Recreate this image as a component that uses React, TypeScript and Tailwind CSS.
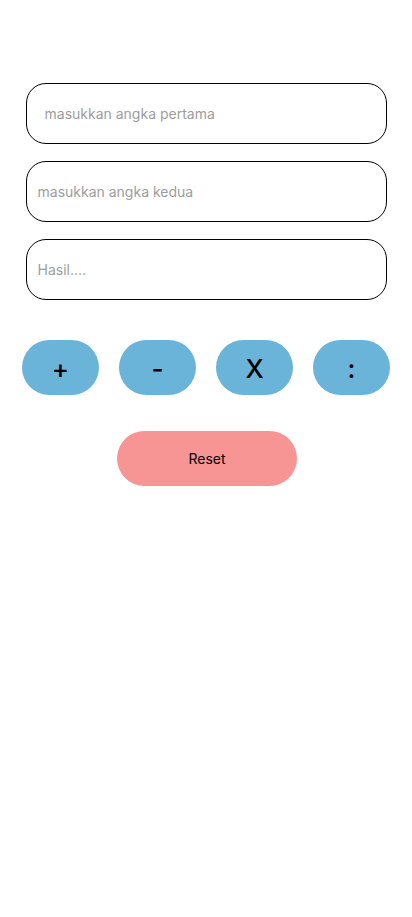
import { useState } from 'react'

export default function App() {
  const [a, setA] = useState('')
  const [b, setB] = useState('')
  const [hasil, setHasil] = useState('')

  const hitung = (op: string) => {
    const x = parseFloat(a)
    const y = parseFloat(b)
    if (isNaN(x) || isNaN(y)) return
    let r = 0
    if (op === '+') r = x + y
    if (op === '-') r = x - y
    if (op === 'x') r = x * y
    if (op === ':') r = x / y
    setHasil(String(r))
  }

  const reset = () => {
    setA('')
    setB('')
    setHasil('')
  }

  const inputClass =
    'h-[61px] w-[361px] rounded-[20px] border border-black bg-white text-[14px] text-black outline-none placeholder:text-[#9d9d9d]'

  return (
    <div className="min-h-[917px] w-[412px] bg-white font-['Inter','Noto_Sans',sans-serif]">
      <div className="flex flex-col items-center gap-[17px] pt-[83px]">
        <input className={`${inputClass} pl-[18px]`} placeholder="masukkan angka pertama" value={a} onChange={(e) => setA(e.target.value)} />
        <input className={`${inputClass} pl-[11px]`} placeholder="masukkan angka kedua" value={b} onChange={(e) => setB(e.target.value)} />
        <input className={`${inputClass} pl-[11px]`} placeholder="Hasil...." value={hasil} readOnly />
      </div>
      <div className="mt-[40px] flex justify-center gap-[20px]">
        {['+', '-', 'X', ':'].map((op) => (
          <button
            key={op}
            onClick={() => hitung(op.toLowerCase())}
            className="flex h-[55px] w-[77px] items-center justify-center rounded-full bg-[#6ab3d9] pt-[2px] text-[26px] font-medium leading-none text-black"
          >
            {op}
          </button>
        ))}
      </div>
      <div className="mt-[36px] flex justify-center pl-[2px]">
        <button onClick={reset} className="h-[55px] w-[180px] rounded-full bg-[#f79494] text-[14px] text-black">
          Reset
        </button>
      </div>
    </div>
  )
}
